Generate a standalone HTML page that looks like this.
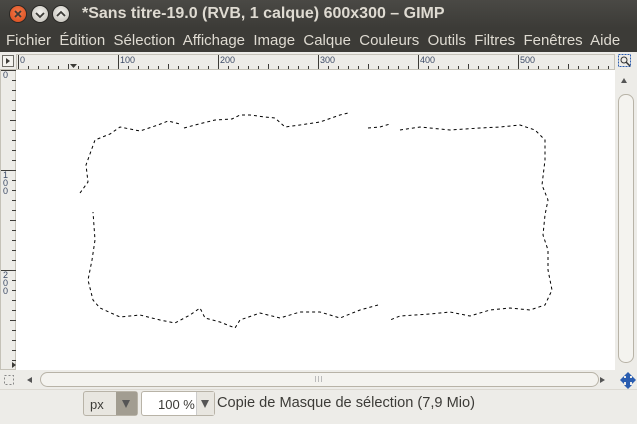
<!DOCTYPE html>
<html><head><meta charset="utf-8"><style>
*{margin:0;padding:0;box-sizing:border-box}
body{width:637px;height:424px;overflow:hidden;background:#edece8;font-family:"Liberation Sans","DejaVu Sans",sans-serif;position:relative}
.abs{position:absolute}
#title{left:0;top:0;width:637px;height:28px;background:linear-gradient(#4a4945,#3c3b37);color:#dfdbd2;font-weight:bold;font-size:16px}
#menu{left:0;top:28px;width:637px;height:24px;background:#3c3b37;color:#dfdbd2;font-size:15px;white-space:nowrap}
.btn{position:absolute;top:6px;width:16px;height:16px;border-radius:50%}
</style></head><body>
<div id="title" class="abs">
 <div class="btn" style="left:10px;background:radial-gradient(circle at 50% 40%,#f47a4a,#d5481a);box-shadow:0 0 0 1px #2a2926"></div>
 <div class="btn" style="left:32px;background:radial-gradient(circle at 50% 40%,#f4f3ef,#bdbab2);box-shadow:0 0 0 1px #2a2926"></div>
 <div class="btn" style="left:53px;background:radial-gradient(circle at 50% 40%,#f4f3ef,#bdbab2);box-shadow:0 0 0 1px #2a2926"></div>
 <svg class="abs" style="left:0;top:0" width="80" height="28"><g stroke="#3c3b37" stroke-width="1.8" fill="none"><path d="M15 11l6 6M21 11l-6 6"/><path d="M36 13l4 4 4-4"/><path d="M57 16l4-4 4 4"/></g></svg>
 <div class="abs" style="left:82px;top:5px">*Sans titre-19.0 (RVB, 1 calque) 600x300 – GIMP</div>
</div>
<div id="menu" class="abs"><span class="abs" style="left:6px;top:4px;word-spacing:0">Fichier&nbsp; Édition&nbsp; Sélection&nbsp; Affichage&nbsp; Image&nbsp; Calque&nbsp; Couleurs&nbsp; Outils&nbsp; Filtres&nbsp; Fenêtres&nbsp; Aide</span></div>
<div class="abs" style="left:0;top:52px;width:637px;height:18px;background:#edece8"></div>
<svg class="abs" style="left:0;top:52px" width="637" height="320">
 <rect x="2.5" y="3.5" width="11" height="11" fill="#f4f3ef" stroke="#6e6c66"/><path d="M6 6l4 3-4 3z" fill="#3c3b37"/>
 <rect x="16.5" y="2.5" width="598" height="15" fill="#edece8" stroke="#c5c2b8"/>
 <rect x="0.5" y="17.5" width="15" height="300" fill="#edece8" stroke="#c5c2b8"/>
 <g stroke="#3c3b37" stroke-width="1">
  <path d="M18.5 3v14M118.5 3v14M218.5 3v14M318.5 3v14M418.5 3v14M518.5 3v14"/>
  <path d="M28.5 14v3M38.5 14v3M48.5 14v3M58.5 14v3M68.5 12v5M78.5 14v3M88.5 14v3M98.5 14v3M108.5 14v3M128.5 14v3M138.5 14v3M148.5 14v3M158.5 14v3M168.5 12v5M178.5 14v3M188.5 14v3M198.5 14v3M208.5 14v3M228.5 14v3M238.5 14v3M248.5 14v3M258.5 14v3M268.5 12v5M278.5 14v3M288.5 14v3M298.5 14v3M308.5 14v3M328.5 14v3M338.5 14v3M348.5 14v3M358.5 14v3M368.5 12v5M378.5 14v3M388.5 14v3M398.5 14v3M408.5 14v3M428.5 14v3M438.5 14v3M448.5 14v3M458.5 14v3M468.5 12v5M478.5 14v3M488.5 14v3M498.5 14v3M508.5 14v3M528.5 14v3M538.5 14v3M548.5 14v3M558.5 14v3M568.5 12v5M578.5 14v3M588.5 14v3M598.5 14v3M608.5 14v3"/>
  <path d="M1 18.5h15M1 118.5h15M1 218.5h15"/>
  <path d="M12 28.5h4M12 38.5h4M12 48.5h4M12 58.5h4M10 68.5h6M12 78.5h4M12 88.5h4M12 98.5h4M12 108.5h4M12 128.5h4M12 138.5h4M12 148.5h4M12 158.5h4M10 168.5h6M12 178.5h4M12 188.5h4M12 198.5h4M12 208.5h4M12 228.5h4M12 238.5h4M12 248.5h4M12 258.5h4M10 268.5h6M12 278.5h4M12 288.5h4M12 298.5h4M12 308.5h4"/>
 </g>
 <path d="M70 12h7l-3.5 4z" fill="#3c3b37"/>
 <path d="M12 310l4 3-4 3z" fill="#3c3b37"/>
 <g font-size="9" fill="#3c4a66" font-family="Liberation Sans,sans-serif">
  <text x="20" y="11">0</text><text x="120" y="11">100</text><text x="220" y="11">200</text><text x="320" y="11">300</text><text x="420" y="11">400</text><text x="520" y="11">500</text>
  <text x="3" y="26">0</text>
  <text x="3" y="126">1</text><text x="3" y="134">0</text><text x="3" y="142">0</text>
  <text x="3" y="226">2</text><text x="3" y="234">0</text><text x="3" y="242">0</text>
 </g>
</svg>
<div class="abs" style="left:16px;top:70px;width:599px;height:300px;background:#fff"></div>
<svg class="abs" style="left:0;top:0" width="637" height="424">
 <g fill="none" stroke="#000" stroke-width="1" stroke-dasharray="3,3">
  <path d="M80 193L88 182L86 165L95 140L110 134L120 127L140 131L158 125L168 121L180 124"/>
  <path d="M184 128L195 125L215 120L232 119L240 115L250 115L265 117L275 118L285 127L300 125L320 122L340 115L348 113"/>
  <path d="M368 128L380 127L390 124"/>
  <path d="M400 130L420 127L450 130L480 128L500 127L520 125L535 130L545 140L545 160L542 185L548 200L545 215L543 235L548 250L548 270L552 290L545 305L530 310L510 308L490 310L470 316L450 312L430 314L400 316L390 320"/>
  <path d="M378 305L360 310L340 318L320 312L300 312L280 318L260 313L240 320L235 328L220 322L205 318L200 308L190 315L175 323L160 320L140 315L120 317L100 308L93 300L88 280L92 260L95 240L93 212"/>
 </g>
</svg>
<svg class="abs" style="left:615px;top:52px" width="22" height="320">
 <rect x="3.5" y="2.5" width="12" height="12" fill="none" stroke="#2a5db0" stroke-dasharray="2,1"/><circle cx="9" cy="8" r="3" fill="none" stroke="#333"/><path d="M11 10l4 4" stroke="#333" stroke-width="1.5"/>
 <path d="M9 26l3 5h-6z" fill="#555"/>
 <rect x="3.5" y="42.5" width="15" height="268" rx="7" fill="#f4f3ef" stroke="#b8b3a7"/>
</svg>
<svg class="abs" style="left:0;top:370px" width="637" height="20">
 <rect x="4.5" y="5.5" width="9" height="9" fill="none" stroke="#888" stroke-dasharray="2,2"/>
 <path d="M27 10l5-3v6z" fill="#555"/>
 <rect x="40.5" y="2.5" width="558" height="14" rx="7" fill="#f4f3ef" stroke="#b8b3a7"/>
 <path d="M315.5 6v6M318.5 6v6M321.5 6v6" stroke="#bbb"/>
 <path d="M605 10l-5-3v6z" fill="#555"/>
 <g fill="#2a5db0"><path d="M628 2l4 4h-8zM628 19l4-4h-8zM620 10l4-4v8zM636 10l-4-4v8z"/><rect x="626" y="5" width="4" height="10"/><rect x="622" y="8" width="12" height="4"/></g>
</svg>
<div class="abs" style="left:0;top:389px;width:637px;height:35px;background:#edece8;border-top:1px solid #dcd9d2"></div>
<div class="abs" style="left:83px;top:391px;width:55px;height:25px;border:1px solid #b8b3a7;border-radius:3px;background:#e8e6e0;font-size:13px;color:#3c3b37"><span class="abs" style="left:6px;top:5px">px</span><div class="abs" style="left:32px;top:0;width:21px;height:23px;background:#a29d91"></div><svg class="abs" style="left:37px;top:7px" width="10" height="10"><path d="M1 1h8l-4 8z" fill="#555"/></svg></div>
<div class="abs" style="left:141px;top:391px;width:74px;height:25px;border:1px solid #b8b3a7;border-radius:3px;background:#fff;font-size:13px;color:#3c3b37"><span class="abs" style="left:16px;top:5px">100 %</span><div class="abs" style="left:54px;top:0;width:18px;height:23px;background:#e8e6e0;border-left:1px solid #ccc"></div><svg class="abs" style="left:58px;top:7px" width="10" height="10"><path d="M1 1h8l-4 8z" fill="#555"/></svg></div>
<div class="abs" style="left:217px;top:395px;font-size:14.6px;color:#3c3b37;white-space:nowrap">Copie de Masque de sélection (7,9 Mio)</div>
</body></html>
